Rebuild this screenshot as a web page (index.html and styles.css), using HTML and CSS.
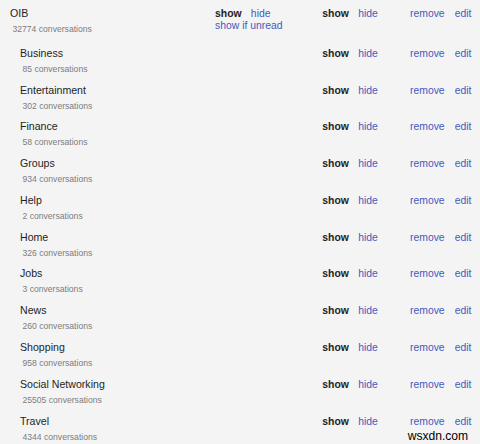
FILE: index.html
```html
<!DOCTYPE html>
<html>
<head>
<meta charset="utf-8">
<link rel="stylesheet" href="styles.css">
</head>
<body>
<div class="list">
  <div class="row top">
    <div class="name-cell">
      <div class="name">OIB</div>
      <div class="count">32774 conversations</div>
    </div>
    <div class="actions stack">
      <div class="pair"><b>show</b><a>hide</a></div>
      <a class="unread">show if unread</a>
    </div>
    <div class="actions"><div class="pair"><b>show</b><a>hide</a></div></div>
    <div class="actions"><div class="pair wide"><a>remove</a><a>edit</a></div></div>
  </div>

  <div class="row child">
    <div class="name-cell"><div class="name">Business</div><div class="count">85 conversations</div></div>
    <div></div>
    <div class="actions"><div class="pair"><b>show</b><a>hide</a></div></div>
    <div class="actions"><div class="pair wide"><a>remove</a><a>edit</a></div></div>
  </div>
  <div class="row child">
    <div class="name-cell"><div class="name">Entertainment</div><div class="count">302 conversations</div></div>
    <div></div>
    <div class="actions"><div class="pair"><b>show</b><a>hide</a></div></div>
    <div class="actions"><div class="pair wide"><a>remove</a><a>edit</a></div></div>
  </div>
  <div class="row child">
    <div class="name-cell"><div class="name">Finance</div><div class="count">58 conversations</div></div>
    <div></div>
    <div class="actions"><div class="pair"><b>show</b><a>hide</a></div></div>
    <div class="actions"><div class="pair wide"><a>remove</a><a>edit</a></div></div>
  </div>
  <div class="row child">
    <div class="name-cell"><div class="name">Groups</div><div class="count">934 conversations</div></div>
    <div></div>
    <div class="actions"><div class="pair"><b>show</b><a>hide</a></div></div>
    <div class="actions"><div class="pair wide"><a>remove</a><a>edit</a></div></div>
  </div>
  <div class="row child">
    <div class="name-cell"><div class="name">Help</div><div class="count">2 conversations</div></div>
    <div></div>
    <div class="actions"><div class="pair"><b>show</b><a>hide</a></div></div>
    <div class="actions"><div class="pair wide"><a>remove</a><a>edit</a></div></div>
  </div>
  <div class="row child">
    <div class="name-cell"><div class="name">Home</div><div class="count">326 conversations</div></div>
    <div></div>
    <div class="actions"><div class="pair"><b>show</b><a>hide</a></div></div>
    <div class="actions"><div class="pair wide"><a>remove</a><a>edit</a></div></div>
  </div>
  <div class="row child">
    <div class="name-cell"><div class="name">Jobs</div><div class="count">3 conversations</div></div>
    <div></div>
    <div class="actions"><div class="pair"><b>show</b><a>hide</a></div></div>
    <div class="actions"><div class="pair wide"><a>remove</a><a>edit</a></div></div>
  </div>
  <div class="row child">
    <div class="name-cell"><div class="name">News</div><div class="count">260 conversations</div></div>
    <div></div>
    <div class="actions"><div class="pair"><b>show</b><a>hide</a></div></div>
    <div class="actions"><div class="pair wide"><a>remove</a><a>edit</a></div></div>
  </div>
  <div class="row child">
    <div class="name-cell"><div class="name">Shopping</div><div class="count">958 conversations</div></div>
    <div></div>
    <div class="actions"><div class="pair"><b>show</b><a>hide</a></div></div>
    <div class="actions"><div class="pair wide"><a>remove</a><a>edit</a></div></div>
  </div>
  <div class="row child">
    <div class="name-cell"><div class="name">Social Networking</div><div class="count">25505 conversations</div></div>
    <div></div>
    <div class="actions"><div class="pair"><b>show</b><a>hide</a></div></div>
    <div class="actions"><div class="pair wide"><a>remove</a><a>edit</a></div></div>
  </div>
  <div class="row child">
    <div class="name-cell"><div class="name">Travel</div><div class="count">4344 conversations</div></div>
    <div></div>
    <div class="actions"><div class="pair"><b>show</b><a>hide</a></div></div>
    <div class="actions"><div class="pair wide"><a>remove</a><a>edit</a></div></div>
  </div>
</div>
<div class="watermark">wsxdn.com</div>
</body>
</html>
```

FILE: styles.css
```css
html, body {
  margin: 0;
  padding: 0;
  background: #f4f4f4;
}
body {
  font-family: "Liberation Sans", Arial, sans-serif;
  color: #222;
  width: 480px;
  height: 444px;
  overflow: hidden;
  position: relative;
}
.list {
  padding-left: 10px;
}
.row {
  display: grid;
  grid-template-columns: 205px 107.3px 87.7px 1fr;
  align-items: start;
}
.row.top {
  padding: 7.4px 0 7px 0;
}
.row.child {
  padding: 4.4px 0;
}
.row.child .name-cell {
  padding-left: 10px;
}
.name {
  font-size: 10.6px;
  line-height: 13px;
  color: #1e1e1e;
}
.count {
  font-size: 8.6px;
  line-height: 12px;
  margin-top: 3px;
  padding-left: 2.5px;
  color: #7c7c7c;
}
.actions {
  font-size: 10.4px;
  line-height: 13px;
}
.pair {
  display: flex;
  gap: 9.3px;
}
.pair.wide {
  gap: 10px;
}
.actions b {
  font-weight: bold;
  color: #1e1e1e;
}
.actions a {
  color: #4459bd;
  cursor: pointer;
}
.unread {
  display: block;
  line-height: 12.4px;
}
.watermark {
  position: absolute;
  left: 407.7px;
  top: 430px;
  font-size: 12.1px;
  line-height: 12px;
  color: #000;
}
```
